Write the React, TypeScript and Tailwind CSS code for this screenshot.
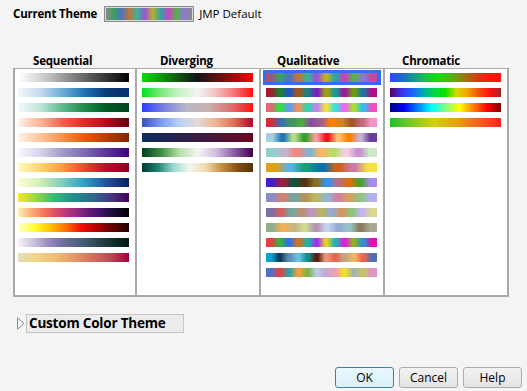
import React from 'react';

type Ramp = string[];

// smooth ramps for the sequential / diverging / chromatic lists
const sequential: Ramp[] = [
  ['#ffffff', '#c8c8c8', '#808080', '#404040', '#000000'],
  ['#f2f6fc', '#c6dbef', '#6baed6', '#2171b5', '#0a3a7a', '#08306b'],
  ['#f2fafb', '#bfe6dc', '#5cba8c', '#1f8a48', '#005a24', '#00441b'],
  ['#fff1ec', '#fcb49a', '#f8604a', '#e02a26', '#b30c1c', '#67000d'],
  ['#fff2e6', '#fdc49a', '#f7904a', '#e45c10', '#b83c02', '#7f2704'],
  ['#f8f8fc', '#d6d4e8', '#a39bc9', '#7b6bb0', '#5a3497', '#3f007d'],
  ['#fffac4', '#fed36a', '#fd9a44', '#f0452a', '#c7042a', '#800026'],
  ['#fcfed6', '#d2eeb6', '#7ccdbb', '#2c9ec2', '#24509f', '#0b1f5a'],
  ['#fde725', '#90d743', '#35b779', '#21918c', '#31688e', '#443983', '#440154'],
  ['#fcf0b4', '#fdaa74', '#f36e5a', '#d1426f', '#a0307c', '#6a1d78', '#3a1268', '#160d2e', '#000004'],
  ['#ffffd4', '#ffff30', '#ffc400', '#ff7000', '#f01000', '#b00000', '#600000', '#200000'],
  ['#f6f0f8', '#cdbfe0', '#9585ba', '#6a6c98', '#47607a', '#2c4650', '#10302c', '#001410'],
  ['#e2e0b4', '#f2d488', '#f2bc74', '#e69866', '#d4705e', '#bc4a52', '#a0003c'],
];

const diverging: Ramp[] = [
  ['#00e000', '#0a9a0a', '#125212', '#141414', '#5a1212', '#a20e0e', '#ff0000'],
  ['#00e020', '#7ae87a', '#c8f2c8', '#f4f4f4', '#f4c0c0', '#f47474', '#ff1010'],
  ['#2b3cff', '#7b82e0', '#b8b8c8', '#c8b0b0', '#e07070', '#ff1010'],
  ['#3b4cc0', '#7a9af6', '#b6cff8', '#e2dcd6', '#f2b094', '#de6e56', '#b40426'],
  ['#0e2c5e', '#1c2654', '#2c1f48', '#42183c', '#58122e', '#6a0620'],
  ['#00401c', '#3a8a44', '#b2dea2', '#f4f4f4', '#d2bee0', '#8a5aa4', '#40004b'],
  ['#003c30', '#1e8274', '#9adcd2', '#f4f4f0', '#f0dcb0', '#c89040', '#8c5010', '#543005'],
];

const chromatic: Ramp[] = [
  ['#2c44ff', '#1c78b8', '#10b860', '#10e010', '#60a810', '#b06010', '#f02010', '#ff1010'],
  ['#5a0060', '#3a30e8', '#2060ff', '#00a8b0', '#00d840', '#10e000', '#d8d800', '#f0a000', '#f05010', '#ff1010', '#a02828'],
  ['#000080', '#0000ff', '#0080ff', '#00ffff', '#80ff80', '#ffff00', '#ff8000', '#ff0000', '#800000'],
  ['#20c030', '#80c820', '#d0d010', '#e8a010', '#f86018', '#ff2020'],
];

// categorical palettes: colour blocks with soft edges
const qualitative: Ramp[] = [
  ['#9a5a80', '#3aa060', '#4a74c4', '#c27634', '#36b49a', '#9c52d2', '#b8b02c', '#2ea2a6', '#c444c0', '#5ab048', '#8a7ad0', '#c24a98'],
  ['#a01e32', '#1c8030', '#1e54c0', '#a85418', '#1c8080', '#7c1cc6', '#a0a010', '#1c9898', '#a0189c', '#6c9c10', '#1c74a0', '#b01088'],
  ['#e06878', '#34e040', '#5c9ef0', '#f0905a', '#34d4ac', '#c084f0', '#f0e040', '#34e0e0', '#f064f0', '#a4e030', '#2cc0f0', '#f050c0'],
  ['#d42c3c', '#3a6eb0', '#3c9860', '#4ea844', '#8a50a0', '#a0608c', '#ff8000', '#d08020', '#a65428', '#c06a80', '#f494c4'],
  ['#a6cee3', '#1f78b4', '#b2df8a', '#33a02c', '#fb9a99', '#e31a1c', '#fdbf6f', '#ff7f00', '#cab2d6', '#6a3d9a'],
  ['#90d0c8', '#c2b4d0', '#f4867a', '#84b2d4', '#fdb462', '#b4de6a', '#f8cde2', '#c890d0', '#cce8c4'],
  ['#e0a018', '#56b4e9', '#14a078', '#0072b2', '#d06014', '#cc79a7', '#f4e040'],
  ['#4420c4', '#a01e38', '#0e5440', '#553014', '#887020', '#3092f0', '#b87080', '#d87010', '#4aa030', '#a88af0'],
  ['#8c8cc4', '#d68070', '#70a8a0', '#b49060', '#b8b860', '#94b4d6', '#d080a0', '#d4a060', '#90c480', '#b4b0f0'],
  ['#7c70a4', '#d46060', '#70a8a0', '#b89070', '#c094c4', '#b8b460', '#94acd4', '#d89460', '#90c480', '#c4b4f0', '#dcd490'],
  ['#90ae90', '#f2b250', '#c6b484', '#d0da90', '#b494b4', '#c4d4f0', '#94acd2', '#94c4c4', '#8c7c5c', '#a8a894'],
  ['#e04040', '#38b040', '#3070e4', '#d47020', '#20b4a0', '#a030f4', '#e4d020', '#20b4b4', '#e020e0', '#90b020', '#2c90d4', '#e010b0'],
  ['#10a0d0', '#0e3c5c', '#5c8cb0', '#64c4e4', '#10908c', '#5c1c10', '#e89478', '#e46450', '#c4a484', '#f0b464', '#f06450', '#5070b4'],
  ['#5070c4', '#e04444', '#30a0a0', '#f0a040', '#80b440', '#b4cce4', '#c4a8d4', '#f0a0b4', '#f0e020', '#a4b4b4', '#c4c460', '#e494c4'],
];

const smooth = (c: Ramp) => `linear-gradient(to right, ${c.join(', ')})`;

const blocks = (c: Ramp) => {
  const n = c.length;
  const stops: string[] = [];
  c.forEach((col, i) => {
    const a = ((i + 0.38) / n) * 100;
    const b = ((i + 0.62) / n) * 100;
    stops.push(`${col} ${a.toFixed(1)}%`, `${col} ${b.toFixed(1)}%`);
  });
  return `linear-gradient(to right, ${stops.join(', ')})`;
};

const currentTheme = ['#8a8a8a', '#3aa060', '#4a74c4', '#c27634', '#36b49a', '#9c52d2', '#b8b02c', '#2ea2a6', '#c444c0', '#5ab048', '#8a7ad0', '#8a8a8a'];

function Bar({ bg }: { bg: string }) {
  return <div className="h-[9px] w-[111px]" style={{ background: bg }} />;
}

function Column({ ramps, pad, width, last, kind }: { ramps: Ramp[]; pad: string; width: string; last?: boolean; kind: 'smooth' | 'blocks' }) {
  return (
    <div className={`${width} ${last ? '' : 'border-r-2 border-[#a9a9a9]'} bg-white pt-[1px] flex flex-col`}>
      {ramps.map((r, i) => (
        <div key={i} className={`h-[15px] ${pad} flex items-center`}>
          <Bar bg={kind === 'smooth' ? smooth(r) : blocks(r)} />
        </div>
      ))}
    </div>
  );
}

function Btn({ label, primary }: { label: string; primary?: boolean }) {
  return (
    <button
      className={
        primary
          ? 'w-[59px] h-[21px] rounded-[3px] border border-[#3c7fb1] bg-gradient-to-b from-[#eaf6fd] to-[#d9f0fc] text-[12px] text-black'
          : 'w-[59px] h-[21px] rounded-[3px] border border-[#acacac] bg-gradient-to-b from-[#f2f2f2] to-[#e3e3e3] text-[12px] text-black'
      }
    >
      {label}
    </button>
  );
}

export default function App() {
  return (
    <div className="w-[527px] h-[391px] bg-[#f4f4f4] pt-[6px] text-black font-['Open_Sans',sans-serif] overflow-hidden">
      <div className="flex items-center h-[16px] pl-[13px]">
        <span className="text-[11.5px] font-bold tracking-[-0.2px]">Current Theme</span>
        <div className="ml-[7px] w-[90px] h-[16px] border border-[#8c8c8c] p-[1px] bg-[#d8d8d8]">
          <div className="w-full h-full" style={{ background: smooth(currentTheme) }} />
        </div>
        <span className="ml-[5px] text-[11.5px]">JMP Default</span>
      </div>

      <div className="flex mt-[31px] h-[15px] pl-[13px] text-[11.5px] font-bold leading-[15px] tracking-[-0.2px]">
        <div className="w-[123px] pl-[20px]">Sequential</div>
        <div className="w-[124px] pl-[24px]">Diverging</div>
        <div className="w-[124px] pl-[17px]">Qualitative</div>
        <div className="w-[124px] pl-[18px]">Chromatic</div>
      </div>

      <div className="ml-[13px] w-[496px] h-[229px] flex border-t border-x-2 border-b-2 border-[#a9a9a9] bg-white">
        <Column ramps={sequential} pad="pl-[3px]" width="w-[122px]" kind="smooth" />
        <Column ramps={diverging} pad="pl-[5px]" width="w-[124px]" kind="smooth" />
        <div className="w-[124px] border-r-2 border-[#a9a9a9] bg-white pt-[1px] flex flex-col">
          {qualitative.map((r, i) => (
            <div key={i} className={`h-[15px] flex items-center ${i === 0 ? 'mx-[2px] pl-[3px] bg-[#2f6ef8]' : 'pl-[5px]'}`}>
              <Bar bg={blocks(r)} />
            </div>
          ))}
        </div>
        <Column ramps={chromatic} pad="pl-[5px]" width="w-[122px]" last kind="smooth" />
      </div>

      <div className="flex items-center mt-[17px] h-[19px] pl-[17px]">
        <svg width="8" height="13" viewBox="0 0 8 13" className="mr-[1px]">
          <path d="M0.5 0.8 L7 6.5 L0.5 12.2 Z" fill="#f8f8f8" stroke="#8e8e8e" strokeWidth="1" />
        </svg>
        <div className="h-[19px] w-[158px] border border-[#c6c6c6] bg-[#ebebeb] pl-[2px] flex items-center text-[13.5px] font-bold tracking-[-0.2px]">
          Custom Color Theme
        </div>
      </div>

      <div className="flex justify-end gap-[5px] mt-[34px] pr-[5px]">
        <Btn label="OK" primary />
        <Btn label="Cancel" />
        <Btn label="Help" />
      </div>
    </div>
  );
}
